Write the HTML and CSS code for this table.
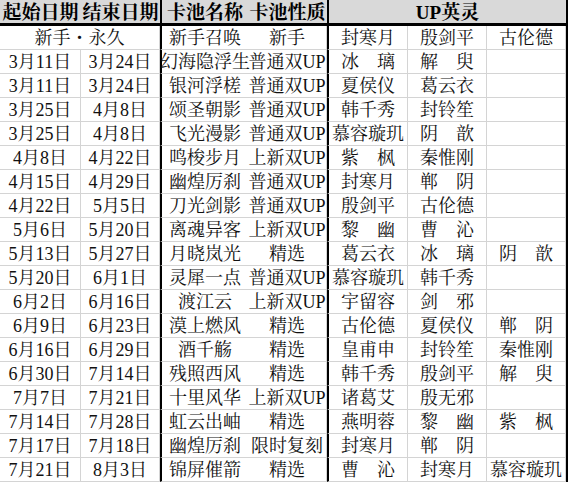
FILE: index.html
```html
<!DOCTYPE html>
<html lang="zh">
<head>
<meta charset="utf-8">
<link rel="stylesheet" href="styles.css">
</head>
<body>
<div class="sheet">
  <div class="c h">起始日期</div>
  <div class="c h">结束日期</div>
  <div class="c h k">卡池名称</div>
  <div class="c h">卡池性质</div>
  <div class="c h k up">UP英灵</div>

  <div class="c span2">新手・永久</div>
  <div class="c k">新手召唤</div>
  <div class="c">新手</div>
  <div class="c k">封寒月</div>
  <div class="c">殷剑平</div>
  <div class="c">古伦德</div>

  <div class="c">3月11日</div><div class="c">3月24日</div><div class="c k">幻海隐浮生</div><div class="c">普通双UP</div><div class="c k">冰　璃</div><div class="c">解　臾</div><div class="c"></div>
  <div class="c">3月11日</div><div class="c">3月24日</div><div class="c k">银河浮槎</div><div class="c">普通双UP</div><div class="c k">夏侯仪</div><div class="c">葛云衣</div><div class="c"></div>
  <div class="c">3月25日</div><div class="c">4月8日</div><div class="c k">颂圣朝影</div><div class="c">普通双UP</div><div class="c k">韩千秀</div><div class="c">封铃笙</div><div class="c"></div>
  <div class="c">3月25日</div><div class="c">4月8日</div><div class="c k">飞光漫影</div><div class="c">普通双UP</div><div class="c k">慕容璇玑</div><div class="c">阴　歆</div><div class="c"></div>
  <div class="c">4月8日</div><div class="c">4月22日</div><div class="c k">鸣梭步月</div><div class="c">上新双UP</div><div class="c k">紫　枫</div><div class="c">秦惟刚</div><div class="c"></div>
  <div class="c">4月15日</div><div class="c">4月29日</div><div class="c k">幽煌厉刹</div><div class="c">普通双UP</div><div class="c k">封寒月</div><div class="c">郸　阴</div><div class="c"></div>
  <div class="c">4月22日</div><div class="c">5月5日</div><div class="c k">刀光剑影</div><div class="c">普通双UP</div><div class="c k">殷剑平</div><div class="c">古伦德</div><div class="c"></div>
  <div class="c">5月6日</div><div class="c">5月20日</div><div class="c k">离魂异客</div><div class="c">上新双UP</div><div class="c k">黎　幽</div><div class="c">曹　沁</div><div class="c"></div>
  <div class="c">5月13日</div><div class="c">5月27日</div><div class="c k">月晓岚光</div><div class="c">精选</div><div class="c k">葛云衣</div><div class="c">冰　璃</div><div class="c">阴　歆</div>
  <div class="c">5月20日</div><div class="c">6月1日</div><div class="c k">灵犀一点</div><div class="c">普通双UP</div><div class="c k">慕容璇玑</div><div class="c">韩千秀</div><div class="c"></div>
  <div class="c">6月2日</div><div class="c">6月16日</div><div class="c k">渡江云</div><div class="c">上新双UP</div><div class="c k">宇留容</div><div class="c">剑　邪</div><div class="c"></div>
  <div class="c">6月9日</div><div class="c">6月23日</div><div class="c k">漠上燃风</div><div class="c">精选</div><div class="c k">古伦德</div><div class="c">夏侯仪</div><div class="c">郸　阴</div>
  <div class="c">6月16日</div><div class="c">6月29日</div><div class="c k">酒千觞</div><div class="c">精选</div><div class="c k">皇甫申</div><div class="c">封铃笙</div><div class="c">秦惟刚</div>
  <div class="c">6月30日</div><div class="c">7月14日</div><div class="c k">残照西风</div><div class="c">精选</div><div class="c k">韩千秀</div><div class="c">殷剑平</div><div class="c">解　臾</div>
  <div class="c">7月7日</div><div class="c">7月21日</div><div class="c k">十里风华</div><div class="c">上新双UP</div><div class="c k">诸葛艾</div><div class="c">殷无邪</div><div class="c"></div>
  <div class="c">7月14日</div><div class="c">7月28日</div><div class="c k">虹云出岫</div><div class="c">精选</div><div class="c k">燕明蓉</div><div class="c">黎　幽</div><div class="c">紫　枫</div>
  <div class="c">7月17日</div><div class="c">7月18日</div><div class="c k">幽煌厉刹</div><div class="c">限时复刻</div><div class="c k">封寒月</div><div class="c">郸　阴</div><div class="c"></div>
  <div class="c">7月21日</div><div class="c">8月3日</div><div class="c k">锦屏催箭</div><div class="c">精选</div><div class="c k">曹　沁</div><div class="c">封寒月</div><div class="c">慕容璇玑</div>
</div>
</body>
</html>
```
FILE: styles.css
```css
html, body {
  margin: 0;
  padding: 0;
  background: #ffffff;
}
.sheet {
  display: grid;
  grid-template-columns: 81px 79px 88px 79px 81px 79px 79px;
  grid-template-rows: 26px;
  grid-auto-rows: 24px;
  width: 566px;
  border-right: 2px solid #000;
  font-family: "Liberation Serif", "Noto Serif CJK SC", "Noto Sans CJK SC", serif;
  font-size: 18px;
  color: #111;
}
.c {
  box-sizing: border-box;
  display: flex;
  align-items: center;
  justify-content: center;
  white-space: nowrap;
  border-right: 1px solid #d4d4d4;
  border-bottom: 1px solid #d4d4d4;
  line-height: 1;
  min-width: 0;
}
.c:nth-child(7n) { border-right: none; }
.k { border-left: 2px solid #000; }
.h {
  background: #d9d9d9;
  font-weight: bold;
  font-size: 19px;
  color: #000;
  border-right: none;
  border-bottom: 3px solid #000;
  padding-top: 1px;
}
.up { grid-column: span 3; }
.span2 { grid-column: span 2; }
```
